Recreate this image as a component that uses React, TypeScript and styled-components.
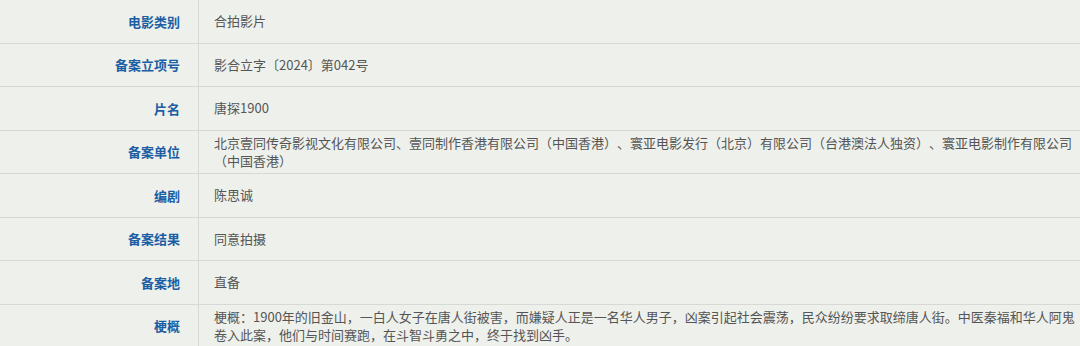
import styled, { createGlobalStyle } from "styled-components";

const GlobalStyle = createGlobalStyle`
  html, body {
    margin: 0;
    padding: 0;
    background-color: #eef0eb;
  }
  body {
    font-family: "Noto Sans CJK SC", "Noto Sans", sans-serif;
    text-spacing-trim: space-all;
    overflow: hidden;
  }
`;

const rows = [
  { label: "电影类别", value: "合拍影片" },
  { label: "备案立项号", value: "影合立字〔2024〕第042号" },
  { label: "片名", value: "唐探1900" },
  {
    label: "备案单位",
    value:
      "北京壹同传奇影视文化有限公司、壹同制作香港有限公司（中国香港）、寰亚电影发行（北京）有限公司（台港澳法人独资）、寰亚电影制作有限公司（中国香港）",
  },
  { label: "编剧", value: "陈思诚" },
  { label: "备案结果", value: "同意拍摄" },
  { label: "备案地", value: "直备" },
  {
    label: "梗概",
    value:
      "梗概：1900年的旧金山，一白人女子在唐人街被害，而嫌疑人正是一名华人男子，凶案引起社会震荡，民众纷纷要求取缔唐人街。中医秦福和华人阿鬼卷入此案，他们与时间赛跑，在斗智斗勇之中，终于找到凶手。",
  },
];

const App = () => {
  return (
    <>
      <GlobalStyle />
      <Table>
        {rows.map((row) => (
          <Row key={row.label}>
            <Label>{row.label}</Label>
            <Value>{row.value}</Value>
          </Row>
        ))}
      </Table>
    </>
  );
};

export default App;

const Table = styled.div`
  width: 1080px;
  display: flex;
  flex-direction: column;
`;

const Row = styled.div`
  display: grid;
  grid-template-columns: 199px 1fr;
  height: 43.5px;
  box-sizing: border-box;
  border-bottom: 1px solid #d6d9d4;
`;

const Label = styled.div`
  display: flex;
  align-items: center;
  justify-content: flex-end;
  padding-right: 18px;
  border-right: 1px solid #d6d9d4;
  color: #1b5ea3;
  font-size: 13px;
  font-weight: bold;
`;

const Value = styled.div`
  display: flex;
  align-items: center;
  padding-left: 15px;
  padding-right: 0;
  color: #555555;
  font-size: 13px;
  line-height: 18px;
  text-spacing-trim: space-all;
`;
